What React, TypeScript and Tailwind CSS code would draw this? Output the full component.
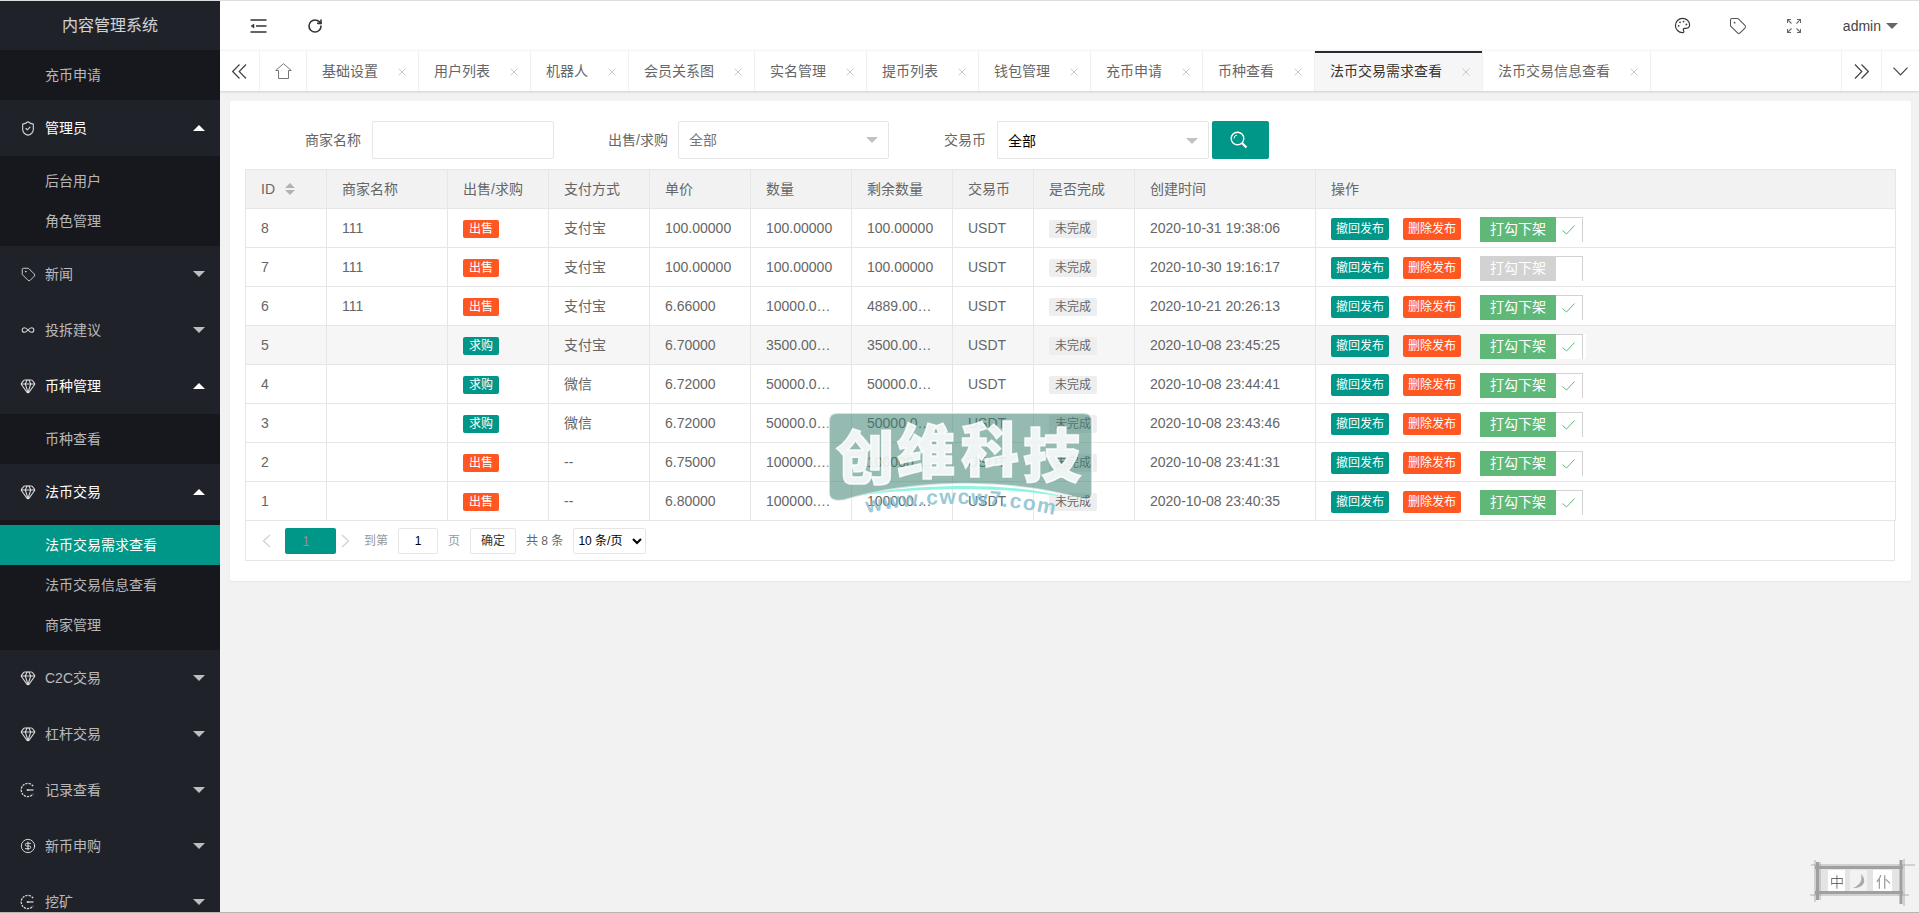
import React from "react";
import { RotateCw, Palette, Tag, ShieldCheck, Gem, Infinity as InfinityIcon, CircleDollarSign } from "lucide-react";

const RecordIcon = () => (
  <svg width="16" height="16" viewBox="0 0 16 16" fill="none" stroke="currentColor" strokeWidth="1.3">
    <path d="M13.2 4.2A6.6 6.6 0 1 0 13.2 11.8" strokeDasharray="2.2 1" />
    <path d="M8 8h5.5" />
    <circle cx="7.6" cy="8" r="1" fill="currentColor" stroke="none" />
  </svg>
);

type Item = { label: string; icon?: React.ReactNode; open?: boolean; sub?: string[]; active?: string };

const menu: Item[] = [
  { label: "管理员", icon: <ShieldCheck size={17} strokeWidth={1.7} />, open: true, sub: ["后台用户", "角色管理"] },
  { label: "新闻", icon: <Tag size={15} strokeWidth={1.5} /> },
  { label: "投拆建议", icon: <InfinityIcon size={14} strokeWidth={1.8} /> },
  { label: "币种管理", icon: <Gem size={16} strokeWidth={1.7} />, open: true, sub: ["币种查看"] },
  { label: "法币交易", icon: <Gem size={16} strokeWidth={1.7} />, open: true, sub: ["法币交易需求查看", "法币交易信息查看", "商家管理"], active: "法币交易需求查看" },
  { label: "C2C交易", icon: <Gem size={16} strokeWidth={1.7} /> },
  { label: "杠杆交易", icon: <Gem size={16} strokeWidth={1.7} /> },
  { label: "记录查看", icon: <RecordIcon /> },
  { label: "新币申购", icon: <CircleDollarSign size={16} strokeWidth={1.5} /> },
  { label: "挖矿", icon: <RecordIcon /> },
];

function SubList({ items, active }: { items: string[]; active?: string }) {
  return (
    <ul className="bg-[#16181d] py-[5px]">
      {items.map((s) => (
        <li key={s} className={`h-10 leading-10 pl-[45px] text-sm ${s === active ? "bg-[#009688] text-white" : "text-white/70"}`}>
          {s}
        </li>
      ))}
    </ul>
  );
}

function Sidebar() {
  return (
    <aside className="w-[220px] shrink-0 bg-[#20222a] overflow-hidden">
      <div className="h-[49px] leading-[49px] text-center text-base text-white/80">内容管理系统</div>
      <SubList items={["充币申请"]} />
      {menu.map((m) => (
        <div key={m.label}>
          <div className={`h-14 flex items-center pl-5 pr-[15px] text-sm ${m.open ? "text-white" : "text-white/70"}`}>
            <span className="w-4 flex justify-center mr-[9px] text-white/80">{m.icon}</span>
            <span>{m.label}</span>
            {m.open ? (
              <span className="ml-auto w-0 h-0 border-x-[6px] border-x-transparent border-b-[6px] border-b-white" />
            ) : (
              <span className="ml-auto w-0 h-0 border-x-[6px] border-x-transparent border-t-[6px] border-t-[#bcbdbf]" />
            )}
          </div>
          {m.sub && <SubList items={m.sub} active={m.active} />}
        </div>
      ))}
    </aside>
  );
}

const Shrink = () => (
  <svg width="17" height="14" viewBox="0 0 17 14" fill="none" stroke="#333" strokeWidth="1.5">
    <path d="M0.5 1h16M6 7h10.500M0.5 13h16" />
    <path d="M4 5L1 7l3 2z" fill="#333" strokeWidth="0.5" />
  </svg>
);

const Expand = () => (
  <svg width="14" height="14" viewBox="0 0 14 14" fill="none" stroke="#666" strokeWidth="1.1">
    <path d="M0.500 4V0.500H4M0.800 0.800L4.500 4.500M10 0.500h3.500V4M13.200 0.800L9.500 4.500M0.500 10v3.500H4M0.800 13.200L4.500 9.500M13.500 10v3.500H10M13.200 13.200L9.500 9.500" />
  </svg>
);

function Header() {
  return (
    <header className="h-[49px] bg-white flex items-center shrink-0 text-[#333]">
      <span className="ml-[30px] flex"><Shrink /></span>
      <span className="ml-[40px] flex"><RotateCw size={16} strokeWidth={2.4} /></span>
      <div className="ml-auto flex items-center">
        <Palette size={17} strokeWidth={1.6} color="#333" />
        <Tag size={18} strokeWidth={1.4} color="#555" className="ml-[38px]" />
        <span className="ml-[40px] flex"><Expand /></span>
        <span className="ml-[42px] text-sm text-[#444]">admin</span>
        <span className="ml-[5px] mr-[21px] w-0 h-0 border-x-[6px] border-x-transparent border-t-[6px] border-t-[#666]" />
      </div>
    </header>
  );
}

const CloseX = () => (
  <svg width="8" height="8" viewBox="0 0 8 8" stroke="#c8c8c8" strokeWidth="1" fill="none" className="absolute right-[12px] top-[17px]">
    <path d="M0.500 0.500l7 7M7.500 0.500l-7 7" />
  </svg>
);

const tabs = ["基础设置", "用户列表", "机器人", "会员关系图", "实名管理", "提币列表", "钱包管理", "充币申请", "币种查看", "法币交易需求查看", "法币交易信息查看"];

function Tabs() {
  return (
    <nav className="h-[41px] bg-white shrink-0 flex border-t border-[#f4f4f4] shadow-[0_1px_2px_rgba(0,0,0,0.15)] text-sm text-[#666] relative">
      <div className="w-10 flex items-center justify-center border-r border-[#f0f0f0]">
        <svg width="15" height="15" viewBox="0 0 15 15" fill="none" stroke="#444" strokeWidth="1.200">
          <path d="M7.500 0.500L0.700 7.500l6.800 7M14 0.500L7.200 7.500l6.800 7" />
        </svg>
      </div>
      <div className="w-[47px] flex items-center justify-center border-r border-[#f0f0f0]">
        <svg width="17" height="16" viewBox="0 0 17 16" fill="none" stroke="#777" strokeWidth="1">
          <path d="M0.700 7.500L8.500 0.700l7.800 6.800h-2.800v8h-10v-8z" />
        </svg>
      </div>
      {tabs.map((t) => {
        const active = t === "法币交易需求查看";
        return (
          <div
            key={t}
            className={`relative pl-[15px] pr-[40px] leading-[40px] whitespace-nowrap border-r border-[#f0f0f0] ${active ? "bg-[#f6f6f6] text-[#333]" : ""}`}
          >
            {active && <span className="absolute left-0 right-0 top-0 h-[2px] bg-[#292b34]" />}
            {t}
            <CloseX />
          </div>
        );
      })}
      <div className="ml-auto w-10 flex items-center justify-center border-l border-[#f0f0f0]">
        <svg width="15" height="15" viewBox="0 0 15 15" fill="none" stroke="#444" strokeWidth="1.200">
          <path d="M1 0.500L7.800 7.500l-6.800 7M7.500 0.500l6.800 7-6.800 7" />
        </svg>
      </div>
      <div className="w-[38px] flex items-center justify-center border-l border-[#f0f0f0]">
        <svg width="15" height="9" viewBox="0 0 15 9" fill="none" stroke="#444" strokeWidth="1.200">
          <path d="M0.500 0.700L7.500 8l7-7.300" />
        </svg>
      </div>
    </nav>
  );
}

function FakeSelect({ width, dark }: { width: string; dark?: boolean }) {
  return (
    <div className={`h-[38px] ${width} border border-[#e6e6e6] rounded-[2px] bg-white flex items-center pl-[10px] pr-[10px] text-sm ${dark ? "text-black pt-[2px]" : "text-[#777]"}`}>
      全部
      <span className="ml-auto w-0 h-0 border-x-[6px] border-x-transparent border-t-[6px] border-t-[#c2c2c2]" />
    </div>
  );
}

function SearchForm() {
  return (
    <div className="flex items-center h-[38px] mb-[10px] pl-[60px] text-sm text-[#666]">
      <span>商家名称</span>
      <input className="ml-[11px] w-[182px] h-[38px] border border-[#e6e6e6] rounded-[2px] bg-white" />
      <span className="ml-[54px]">出售/求购</span>
      <span className="ml-[10px]"><FakeSelect width="w-[211px]" /></span>
      <span className="ml-[55px]">交易币</span>
      <span className="ml-[11px]"><FakeSelect width="w-[212px]" dark /></span>
      <button className="ml-[3px] w-[57px] h-[38px] bg-[#009688] rounded-[2px] flex items-center justify-center">
        <svg width="18" height="18" viewBox="0 0 18 18" fill="none" stroke="#fff" className="mr-[2px]">
          <circle cx="7.500" cy="7.500" r="6.300" strokeWidth="1.400" />
          <path d="M4 7.500A3.500 3.500 0 0 1 7 4" strokeWidth="1" />
          <path d="M12.200 12.200L16.500 16.500" strokeWidth="2.200" />
        </svg>
      </button>
    </div>
  );
}

type Row = { id: number; shop: string; sell: boolean; pay: string; price: string; qty: string; left: string; date: string; on: boolean; hover?: boolean };
const rows: Row[] = [
  { id: 8, shop: "111", sell: true, pay: "支付宝", price: "100.00000", qty: "100.00000", left: "100.00000", date: "2020-10-31 19:38:06", on: true },
  { id: 7, shop: "111", sell: true, pay: "支付宝", price: "100.00000", qty: "100.00000", left: "100.00000", date: "2020-10-30 19:16:17", on: false },
  { id: 6, shop: "111", sell: true, pay: "支付宝", price: "6.66000", qty: "10000.00000", left: "4889.00000", date: "2020-10-21 20:26:13", on: true },
  { id: 5, shop: "", sell: false, pay: "支付宝", price: "6.70000", qty: "3500.00000", left: "3500.00000", date: "2020-10-08 23:45:25", on: true, hover: true },
  { id: 4, shop: "", sell: false, pay: "微信", price: "6.72000", qty: "50000.00000", left: "50000.00000", date: "2020-10-08 23:44:41", on: true },
  { id: 3, shop: "", sell: false, pay: "微信", price: "6.72000", qty: "50000.00000", left: "50000.00000", date: "2020-10-08 23:43:46", on: true },
  { id: 2, shop: "", sell: true, pay: "--", price: "6.75000", qty: "100000.00000", left: "100000.00000", date: "2020-10-08 23:41:31", on: true },
  { id: 1, shop: "", sell: true, pay: "--", price: "6.80000", qty: "100000.00000", left: "100000.00000", date: "2020-10-08 23:40:35", on: true },
];

const th = "border border-[#e6e6e6] px-[15px] h-[39px] font-normal text-left text-sm text-[#666] whitespace-nowrap";
const td = "border border-[#e6e6e6] px-[15px] h-[39px] text-sm text-[#666] truncate";

function Switch({ on, hover }: { on: boolean; hover?: boolean }) {
  return (
    <span className="ml-[19px] flex h-[25px] mt-[1px]">
      <span className={`w-[76px] pl-[10px] leading-[25px] text-sm text-white ${on ? "bg-[#5fb878]" : "bg-[#d2d2d2]"}`}>打勾下架</span>
      <span className="w-[27px] border-t border-r border-[#d2d2d2] flex items-center justify-center pr-[2px] bg-white">
        {on && (
          <svg width="13" height="10" viewBox="0 0 13 10" fill="none" stroke="#5fb878" strokeWidth="1">
            <path d="M0.500 5.500L4.500 9l8-8.500" />
          </svg>
        )}
      </span>
      {hover && <span className="w-[3px] bg-white" />}
    </span>
  );
}

function DataTable() {
  const heads = ["商家名称", "出售/求购", "支付方式", "单价", "数量", "剩余数量", "交易币", "是否完成", "创建时间", "操作"];
  return (
    <table className="table-fixed border-collapse w-[1650px]">
      <colgroup>
        <col className="w-[81px]" />
        <col className="w-[121px]" />
        <col className="w-[101px]" />
        <col className="w-[101px]" />
        <col className="w-[101px]" />
        <col className="w-[101px]" />
        <col className="w-[101px]" />
        <col className="w-[81px]" />
        <col className="w-[101px]" />
        <col className="w-[181px]" />
        <col className="w-[580px]" />
      </colgroup>
      <thead>
        <tr className="bg-[#f2f2f2]">
          <th className={th}>
            <span className="flex items-center">
              ID
              <span className="ml-[10px] flex flex-col gap-[2px]">
                <span className="w-0 h-0 border-x-[5px] border-x-transparent border-b-[5px] border-b-[#b2b2b2]" />
                <span className="w-0 h-0 border-x-[5px] border-x-transparent border-t-[5px] border-t-[#b2b2b2]" />
              </span>
            </span>
          </th>
          {heads.map((h) => (
            <th key={h} className={th}>{h}</th>
          ))}
        </tr>
      </thead>
      <tbody>
        {rows.map((r) => (
          <tr key={r.id} className={r.hover ? "bg-[#f6f6f6]" : "bg-white"}>
            <td className={td}>{r.id}</td>
            <td className={td}>{r.shop}</td>
            <td className={td}>
              <span className={`inline-block align-middle h-[18px] leading-[18px] px-[6px] rounded-[2px] text-xs text-white ${r.sell ? "bg-[#ff5722]" : "bg-[#009688]"}`}>
                {r.sell ? "出售" : "求购"}
              </span>
            </td>
            <td className={td}>{r.pay}</td>
            <td className={td}>{r.price}</td>
            <td className={td}>{r.qty}</td>
            <td className={td}>{r.left}</td>
            <td className={td}>USDT</td>
            <td className={td}>
              <span className="inline-block align-middle h-[18px] leading-[18px] px-[6px] rounded-[2px] text-xs text-[#666] bg-[#eeeeee]">未完成</span>
            </td>
            <td className={td}>{r.date}</td>
            <td className="border border-[#e6e6e6] px-[15px] h-[39px]">
              <div className="flex items-center pt-[2px]">
                <span className="w-[58px] h-[22px] leading-[22px] text-center rounded-[2px] text-xs text-white bg-[#009688]">撤回发布</span>
                <span className="ml-[14px] w-[58px] h-[22px] leading-[22px] text-center rounded-[2px] text-xs text-white bg-[#ff5722]">删除发布</span>
                <Switch on={r.on} hover={r.hover} />
              </div>
            </td>
          </tr>
        ))}
      </tbody>
    </table>
  );
}

function Pagination() {
  const box = "h-[26px] border border-[#e6e6e6] rounded-[2px] bg-white";
  return (
    <div className="h-[40px] w-[1650px] border-x border-b border-[#e6e6e6] flex items-center pl-[16px] text-xs text-[#666]">
      <svg width="9" height="14" viewBox="0 0 9 14" fill="none" stroke="#d2d2d2" strokeWidth="1.300"><path d="M8 1L1.500 7 8 13" /></svg>
      <span className="ml-[14px] w-[51px] h-[26px] leading-[26px] pl-[17px] rounded-[2px] bg-[#009688] text-sm text-[#8f8f8f]">1</span>
      <svg className="ml-[5px]" width="9" height="14" viewBox="0 0 9 14" fill="none" stroke="#d2d2d2" strokeWidth="1.300"><path d="M1 1l6.500 6L1 13" /></svg>
      <span className="ml-[14px] text-[#999]">到第</span>
      <input defaultValue="1" className={`ml-[10px] w-[40px] text-center text-black ${box}`} />
      <span className="ml-[10px] text-[#999]">页</span>
      <span className={`ml-[10px] w-[46px] leading-[24px] text-center text-[#333] ${box}`}>确定</span>
      <span className="ml-[10px]">共 8 条</span>
      <select defaultValue="10" className={`ml-[10px] w-[73px] text-black ${box}`}>
        <option value="10">10 条/页</option>
      </select>
    </div>
  );
}

function Watermark() {
  return (
    <svg width="275" height="112" viewBox="0 0 275 112" className="absolute left-[825px] top-[408px] pointer-events-none">
      <path
        d="M12 4H259Q267 4 267 12V84Q267 92 258 90C215 78 170 74 128 75C88 76 50 82 20 91Q4 94 4 84V12Q4 4 12 4Z"
        fill="#3e8273"
        fillOpacity="0.55"
        stroke="#ffffff"
        strokeOpacity="0.6"
        strokeWidth="2"
      />
      <g fill="#ffffff" fillOpacity="0.85" stroke="#ffffff" strokeOpacity="0.85" strokeWidth="1.500" fontFamily="'Noto Sans CJK SC', sans-serif" fontWeight="900" fontSize="58">
        <text x="11" y="70">创</text>
        <text x="72" y="64">维</text>
        <text x="136" y="62">科</text>
        <text x="198" y="68">技</text>
      </g>
      <path d="M32 87C80 75 190 72 238 88C190 78 90 78 32 87Z" fill="#8ff5e2" />
      <path id="wm-arc" d="M42 104Q135 84 238 108" fill="none" />
      <text fill="#7fbccc" fillOpacity="0.8" fontFamily="'Liberation Sans', sans-serif" fontWeight="700" fontSize="21" letterSpacing="1.500">
        <textPath href="#wm-arc">www.cwcw7.com</textPath>
      </text>
    </svg>
  );
}

function ImeBadge() {
  return (
    <svg width="110" height="48" viewBox="0 0 110 48" className="absolute right-0 bottom-[6px] pointer-events-none blur-[0.4px]">
      <rect x="8" y="9" width="86" height="27" fill="#e4e4e4" />
      <rect x="19" y="12" width="17" height="21" fill="#ffffff" />
      <rect x="41" y="12" width="17" height="21" fill="#f2f2f2" />
      <rect x="64" y="12" width="19" height="21" fill="#ffffff" />
      <g fill="none" stroke="#a0a0a0">
        <path d="M6 9.500H94M6 34.500H94M8.500 4V42M92 2V46" strokeWidth="3" />
        <path d="M2 7H106M1 37H100M6 2V44M11 4V42M95 1V48" strokeWidth="0.800" />
      </g>
      <text x="21" y="29" fontSize="14" fontWeight="300" fill="#444" fontFamily="'Noto Sans CJK SC', sans-serif">中</text>
      <path d="M52 16C58 22 56 30 44 30C49 28 54 24 52 16Z" fill="#aaa" />
      <text x="67" y="29" fontSize="15" fill="#999" fontFamily="'Noto Sans CJK SC', sans-serif">仆</text>
    </svg>
  );
}

export default function App() {
  return (
    <div className="relative h-[913px] w-full overflow-hidden flex border-t border-b border-t-[#dedede] border-b-[#b8b4ae] bg-[#f2f2f2] [font-family:Liberation_Sans,Noto_Sans_CJK_SC,sans-serif]">
      <Sidebar />
      <main className="flex-1 min-w-0 flex flex-col">
        <Header />
        <Tabs />
        <section className="mt-[10px] ml-[10px] mr-2 bg-white rounded-[2px] px-[15px] pt-5 pb-5 shadow-[0_1px_2px_rgba(0,0,0,0.05)]">
          <SearchForm />
          <DataTable />
          <Pagination />
        </section>
      </main>
      <Watermark />
      <ImeBadge />
    </div>
  );
}
